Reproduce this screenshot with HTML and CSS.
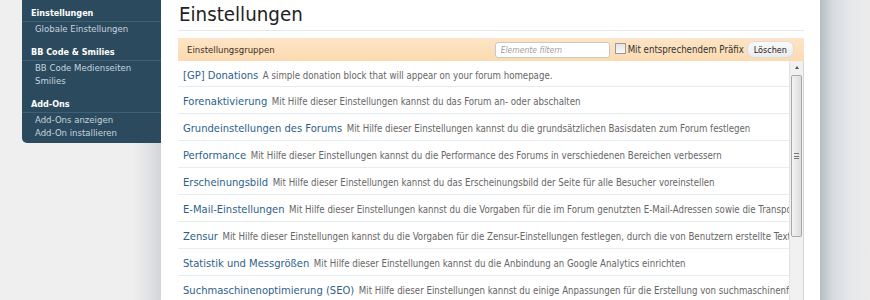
FILE: index.html
```html
<!DOCTYPE html>
<html lang="de">
<head>
  <meta charset="UTF-8">
  <title>Einstellungen</title>
  <link rel="stylesheet" href="styles.css">
</head>
<body>
  <div class="page">
    <div class="gutter"></div>
    <aside class="sidebar-col">
      <nav class="sidebar">
        <div class="section">
          <h3>Einstellungen</h3>
          <ul>
            <li>Globale Einstellungen</li>
          </ul>
        </div>
        <div class="section">
          <h3>BB Code &amp; Smilies</h3>
          <ul>
            <li>BB Code Medienseiten</li>
            <li>Smilies</li>
          </ul>
        </div>
        <div class="section">
          <h3>Add-Ons</h3>
          <ul>
            <li>Add-Ons anzeigen</li>
            <li>Add-On installieren</li>
          </ul>
        </div>
      </nav>
    </aside>

    <main class="panel">
      <h1>Einstellungen</h1>
      <div class="groups">
        <div class="groups-head">
          <span class="groups-title">Einstellungsgruppen</span>
          <div class="filter">
            <input type="text" placeholder="Elemente filtern">
            <label class="prefix"><span class="check"></span>Mit entsprechendem Präfix</label>
            <button class="clear">Löschen</button>
          </div>
        </div>
        <div class="groups-body">
          <ul class="group-list">
            <li><a>[GP] Donations</a> <span class="desc">A simple donation block that will appear on your forum homepage.</span></li>
            <li><a>Forenaktivierung</a> <span class="desc">Mit Hilfe dieser Einstellungen kannst du das Forum an- oder abschalten</span></li>
            <li><a>Grundeinstellungen des Forums</a> <span class="desc">Mit Hilfe dieser Einstellungen kannst du die grundsätzlichen Basisdaten zum Forum festlegen</span></li>
            <li><a>Performance</a> <span class="desc">Mit Hilfe dieser Einstellungen kannst du die Performance des Forums in verschiedenen Bereichen verbessern</span></li>
            <li><a>Erscheinungsbild</a> <span class="desc">Mit Hilfe dieser Einstellungen kannst du das Erscheinungsbild der Seite für alle Besucher voreinstellen</span></li>
            <li><a>E-Mail-Einstellungen</a> <span class="desc">Mit Hilfe dieser Einstellungen kannst du die Vorgaben für die im Forum genutzten E-Mail-Adressen sowie die Transportmethode festlegen</span></li>
            <li><a>Zensur</a> <span class="desc">Mit Hilfe dieser Einstellungen kannst du die Vorgaben für die Zensur-Einstellungen festlegen, durch die von Benutzern erstellte Texte gefiltert werden</span></li>
            <li><a>Statistik und Messgrößen</a> <span class="desc">Mit Hilfe dieser Einstellungen kannst du die Anbindung an Google Analytics einrichten</span></li>
            <li><a>Suchmaschinenoptimierung (SEO)</a> <span class="desc">Mit Hilfe dieser Einstellungen kannst du einige Anpassungen für die Erstellung von suchmaschinenfreundlichen URLs vornehmen</span></li>
          </ul>
          <div class="scrollbar">
            <div class="scroll-up"></div>
            <div class="scroll-thumb"><span class="grip"></span></div>
          </div>
        </div>
      </div>
    </main>

    <div class="backdrop"></div>
  </div>
</body>
</html>
```

FILE: styles.css
```css
* {
  margin: 0;
  padding: 0;
  box-sizing: border-box;
}
body {
  font-family: "DejaVu Sans Condensed", "Liberation Sans", sans-serif;
  font-stretch: condensed;
  background-color: #efefef;
  height: 300px;
  overflow: hidden;
}

.page {
  display: grid;
  grid-template-columns: 22px 139px 659px 1fr;
  height: 300px;
}

/* left column with the admin menu */
.sidebar-col {
  background: linear-gradient(to right, #efefef 80%, #d3d6d9 100%);
}
.sidebar {
  background-color: #2c4a5e;
  border-radius: 0 0 0 5px;
  padding: 5px 0 3px;
}
.sidebar h3 {
  font-size: 9px;
  font-weight: bold;
  color: #ffffff;
  line-height: 16px;
  padding-left: 9px;
  border-bottom: 1px solid #3c6078;
}
.sidebar ul {
  list-style: none;
  padding: 0 0 8px 13px;
}
.sidebar .section:last-child ul {
  padding-bottom: 0;
}
.sidebar li {
  font-size: 9.5px;
  line-height: 13.5px;
  color: #c6d4de;
}

/* main panel */
.panel {
  background-color: #ffffff;
  padding: 0 16px 0 17px;
}
.panel h1 {
  font-size: 20.3px;
  font-weight: normal;
  color: #222;
  line-height: 28px;
  padding: 0 0 2px 1px;
  border-bottom: 1px solid #e2eaf0;
  margin-bottom: 7px;
}

.groups-head {
  display: flex;
  align-items: center;
  justify-content: space-between;
  height: 23px;
  background: linear-gradient(to bottom, #fde5c7, #fbdab0);
  padding: 0 10px 0 9px;
}
.groups-title {
  font-size: 9.5px;
  color: #3b2e1e;
}
.filter {
  display: flex;
  align-items: center;
}
.filter input {
  width: 115px;
  height: 16px;
  border: 1px solid #c8c8c8;
  border-radius: 3px;
  padding: 0 5px;
  font-family: inherit;
  font-size: 8.5px;
  font-style: italic;
}
.filter input::placeholder {
  color: #a0a0a0;
}
.prefix {
  display: flex;
  align-items: center;
  font-size: 9.6px;
  color: #333;
  margin-left: 5px;
}
.check {
  width: 11px;
  height: 11px;
  border: 1px solid #9a9a9a;
  background: linear-gradient(to bottom, #e4e4e4, #fafafa);
  margin-right: 2px;
  margin-top: -3px;
}
.clear {
  margin-left: 3px;
  height: 17px;
  padding: 0 6px;
  border: 1px solid #dcdcdc;
  border-radius: 7px;
  background: linear-gradient(to bottom, #fafafa, #ebebeb);
  font-family: inherit;
  font-size: 9px;
  color: #222;
}

.groups-body {
  display: flex;
  height: 240px;
}
.group-list {
  flex: 1;
  list-style: none;
  overflow: hidden;
}
.group-list li {
  height: 27px;
  line-height: 26px;
  padding-left: 5px;
  border-bottom: 1px solid #e4edf2;
  white-space: nowrap;
}
.group-list li:first-child {
  height: 26px;
  line-height: 25px;
}
.group-list a {
  font-size: 11.1px;
  color: #2d5f8b;
}
.desc {
  font-size: 9.6px;
  color: #666;
}

/* fake scrollbar of the list */
.scrollbar {
  width: 15px;
  background-color: #f1f1f1;
  border-left: 1px solid #e3e3e3;
  border-right: 1px solid #d6d6d6;
  padding: 0 1px;
}
.scroll-up {
  height: 14px;
  position: relative;
}
.scroll-up::after {
  content: "";
  position: absolute;
  left: 4px;
  top: 5px;
  border-left: 2.5px solid transparent;
  border-right: 2.5px solid transparent;
  border-bottom: 3px solid #555;
}
.scroll-thumb {
  height: 162px;
  border: 1px solid #a8a8a8;
  border-radius: 2px;
  background: linear-gradient(to right, #f4f4f4, #dcdcdc);
  display: flex;
  align-items: center;
  justify-content: center;
}
.grip {
  width: 5px;
  height: 6px;
  border-top: 1px solid #777;
  border-bottom: 1px solid #777;
  position: relative;
}
.grip::after {
  content: "";
  position: absolute;
  left: 0;
  right: 0;
  top: 2px;
  border-top: 1px solid #777;
}

/* gray area right of the panel */
.backdrop {
  background: linear-gradient(to right, #b4bcc3 0, #d6dade 12px, #e6e8ea 30px, #ebebeb 50px);
}
```
